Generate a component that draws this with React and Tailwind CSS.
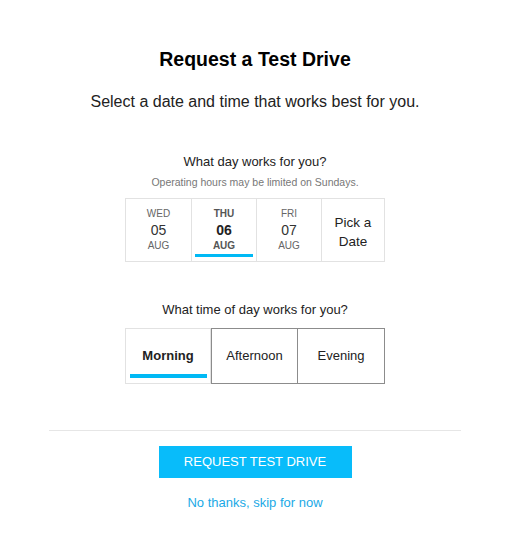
export default function App() {
  const days = [
    { dow: "WED", day: "05", mon: "AUG" },
    { dow: "THU", day: "06", mon: "AUG", active: true },
    { dow: "FRI", day: "07", mon: "AUG" },
  ];

  return (
    <div className="w-[510px] bg-white pt-[47px] pb-8 font-['Liberation_Sans',Arial,sans-serif] text-center">
      <h1 className="text-[19.5px] leading-[24px] font-bold text-black">Request a Test Drive</h1>
      <p className="mt-[21px] text-[16px] leading-[20px] text-[#222]">
        Select a date and time that works best for you.
      </p>

      <div className="mt-[42px] text-[13px] leading-[16px] text-[#222]">What day works for you?</div>
      <div className="mt-[5px] text-[10.5px] leading-[14px] text-[#777]">
        Operating hours may be limited on Sundays.
      </div>

      <div className="mt-[9px] flex justify-center">
        <div className="flex border border-[#e2e2e2]">
          {days.map((d, i) => (
            <div
              key={d.dow}
              className={`relative w-[65px] h-[62px] flex flex-col items-center justify-center ${
                i > 0 ? "border-l border-[#e2e2e2]" : ""
              }`}
            >
              <div className={`text-[10px] leading-[14px] ${d.active ? "text-[#555] font-bold" : "text-[#666]"}`}>
                {d.dow}
              </div>
              <div className={`text-[14px] leading-[18px] ${d.active ? "text-[#222] font-bold" : "text-[#333]"}`}>
                {d.day}
              </div>
              <div className={`text-[10px] leading-[14px] ${d.active ? "text-[#555] font-bold" : "text-[#666]"}`}>
                {d.mon}
              </div>
              {d.active && <div className="absolute left-[3px] right-[3px] bottom-[4px] h-[3px] bg-[#00b9f5]" />}
            </div>
          ))}
          <div className="w-[63px] h-[62px] pt-[4px] border-l border-[#e2e2e2] flex items-center justify-center text-[13.5px] leading-[19px] text-[#222]">
            Pick a<br />Date
          </div>
        </div>
      </div>

      <div className="mt-[40px] text-[13px] leading-[16px] text-[#222]">What time of day works for you?</div>

      <div className="mt-[10px] flex justify-center">
        <div className="relative w-[86px] h-[56px] border border-[#e2e2e2] flex items-center justify-center text-[13px] font-bold text-[#222]">
          Morning
          <div className="absolute left-[4px] right-[3px] bottom-[5px] h-[4px] bg-[#00b9f5]" />
        </div>
        <div className="w-[87px] h-[56px] border border-[#8c8c8c] flex items-center justify-center text-[13px] text-[#222]">
          Afternoon
        </div>
        <div className="w-[87px] h-[56px] border border-l-0 border-[#8c8c8c] flex items-center justify-center text-[13px] text-[#222]">
          Evening
        </div>
      </div>

      <div className="mx-[49px] mt-[46px] border-t border-[#e6e6e6]" />

      <div className="mt-[15px] flex justify-center">
        <button className="w-[193px] h-[32px] bg-[#08bcfa] text-white text-[13px] leading-[32px]">
          REQUEST TEST DRIVE
        </button>
      </div>
      <div className="mt-[17px] text-[13px] leading-[16px] text-[#1aa9e6]">No thanks, skip for now</div>
    </div>
  );
}
